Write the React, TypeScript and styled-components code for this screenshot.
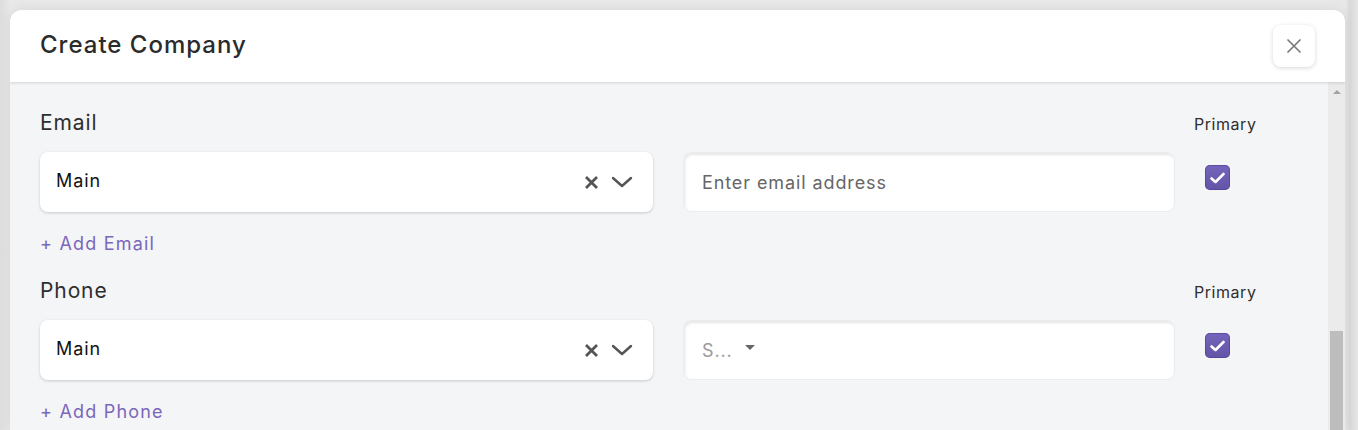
import React from "react";
import styled, { createGlobalStyle } from "styled-components";

const Global = createGlobalStyle`
  html, body { margin: 0; padding: 0; height: 430px; overflow: hidden; }
  body {
    background: #e4e4e4;
    font-family: Inter, "Noto Sans", sans-serif;
    -webkit-font-smoothing: antialiased;
  }
`;

const Page = styled.div`
  height: 430px;
  padding: 10px 13px 0 10px;
  box-sizing: border-box;
  background: linear-gradient(90deg, #dcdcdc 0px, #e8e8e8 10px, #e8e8e8 1345px, #d9d9d9 1350px, #e6e6e6 1358px);
`;

const Modal = styled.div`
  display: flex;
  flex-direction: column;
  height: 420px;
  border-radius: 12px 12px 0 0;
  overflow: hidden;
  background: #f4f5f7;
  box-shadow: 0 0 12px rgba(0, 0, 0, 0.08);
`;

const Header = styled.div`
  height: 72px;
  flex: none;
  display: flex;
  align-items: center;
  justify-content: space-between;
  padding: 0 30px;
  background: #fff;
  box-shadow: 0 1px 3px rgba(0, 0, 0, 0.14);
  position: relative;
  z-index: 1;
`;

const Title = styled.h1`
  margin: -3px 0 0 0;
  font-size: 24px;
  font-weight: 500;
  color: #2b2b2b;
  letter-spacing: 1px;
`;

const CloseButton = styled.button`
  width: 42px;
  height: 42px;
  border: none;
  border-radius: 8px;
  background: #fff;
  box-shadow: 0 1px 4px rgba(0, 0, 0, 0.16);
  display: flex;
  align-items: center;
  justify-content: center;
  padding: 0;
  cursor: pointer;
`;

const BodyRow = styled.div`
  flex: 1;
  display: flex;
  min-height: 0;
`;

const Content = styled.div`
  flex: 1;
  padding: 27px 30px 0 30px;
  overflow: hidden;
`;

const Section = styled.div`
  margin-bottom: 22px;
`;

const Row = styled.div`
  display: flex;
  align-items: flex-start;
`;

const LeftCol = styled.div`
  width: 613px;
  flex: none;
`;

const MidCol = styled.div`
  width: 492px;
  margin-left: 30px;
  flex: none;
`;

const RightCol = styled.div`
  margin-left: 19px;
  display: flex;
  flex-direction: column;
`;

const Label = styled.div`
  font-size: 21px;
  line-height: 28px;
  color: #2e2e2e;
  height: 28px;
  margin-bottom: 15px;
  letter-spacing: 0.9px;
`;

const Spacer = styled.div`
  height: 43px;
`;

const SmallLabel = styled.div`
  font-size: 16px;
  line-height: 22px;
  color: #2e2e2e;
  margin-top: 4px;
  margin-bottom: 30px;
  letter-spacing: 0.55px;
`;

const SelectBox = styled.div`
  height: 60px;
  box-sizing: border-box;
  background: #fff;
  border-radius: 8px;
  box-shadow: 0 1px 3px rgba(0, 0, 0, 0.18);
  display: flex;
  align-items: center;
  padding: 0 20px 0 16px;
`;

const SelectValue = styled.div`
  flex: 1;
  font-size: 18px;
  color: #111;
  margin-top: -4px;
  letter-spacing: 0.9px;
`;

const IconGroup = styled.div`
  display: flex;
  align-items: center;
  gap: 12px;
`;

const InputBox = styled.div`
  height: 60px;
  box-sizing: border-box;
  background: #fff;
  border-radius: 8px;
  border: 1px solid #ececec;
  box-shadow: inset 1px 2px 3px rgba(0, 0, 0, 0.1);
  display: flex;
  align-items: center;
  padding: 0 18px;
`;

const Placeholder = styled.div<{ $muted?: boolean }>`
  font-size: 18px;
  letter-spacing: 0.9px;
  color: ${(p) => (p.$muted ? "#9a9a9a" : "#666")};
`;

const Caret = styled.span`
  display: inline-block;
  margin-left: 12px;
  width: 0;
  height: 0;
  border-left: 5px solid transparent;
  border-right: 5px solid transparent;
  border-top: 5px solid #666;
  transform: translateY(-3px);
`;

const Check = styled.div`
  width: 25px;
  height: 25px;
  margin-left: 11px;
  border-radius: 5px;
  background: linear-gradient(180deg, #7465bb, #6454a8);
  box-shadow: inset 0 0 0 1px rgba(80, 60, 150, 0.6);
  display: flex;
  align-items: center;
  justify-content: center;
`;

const AddLink = styled.div`
  font-size: 18px;
  letter-spacing: 1.2px;
  color: #7a67bb;
  margin-top: 21px;
  line-height: 22px;
`;

const ScrollTrack = styled.div`
  width: 17px;
  flex: none;
  background: #ebebeb;
  display: flex;
  flex-direction: column;
  align-items: center;
`;

const ArrowUp = styled.div`
  margin-top: 8px;
  width: 0;
  height: 0;
  border-left: 4px solid transparent;
  border-right: 4px solid transparent;
  border-bottom: 4px solid #a3a3a3;
`;

const Thumb = styled.div`
  margin-top: 237px;
  width: 13px;
  height: 200px;
  background: #bdbdbd;
`;

const ClearIcon = () => (
  <svg width="15" height="15" viewBox="0 0 15 15">
    <path d="M2 2 L13 13 M13 2 L2 13" stroke="#555" strokeWidth="2.8" strokeLinecap="butt" />
  </svg>
);

const ChevronIcon = () => (
  <svg width="22" height="14" viewBox="0 0 22 14">
    <path d="M2 3 L11 11 L20 3" stroke="#555" strokeWidth="2.4" fill="none" strokeLinecap="round" strokeLinejoin="round" />
  </svg>
);

const CloseIcon = () => (
  <svg width="16" height="16" viewBox="0 0 16 16">
    <path d="M1.5 1.5 L14.5 14.5 M14.5 1.5 L1.5 14.5" stroke="#777" strokeWidth="1.6" />
  </svg>
);

const CheckMark = () => (
  <svg width="15" height="12" viewBox="0 0 15 12">
    <path d="M1.5 6.5 L5.5 10 L13.5 2" stroke="#fff" strokeWidth="2.6" fill="none" strokeLinecap="round" strokeLinejoin="round" />
  </svg>
);

const ContactSection = ({ label, addText, children }: { label: string; addText: string; children: React.ReactNode }) => (
  <Section>
    <Row>
      <LeftCol>
        <Label>{label}</Label>
        <SelectBox>
          <SelectValue>Main</SelectValue>
          <IconGroup>
            <ClearIcon />
            <ChevronIcon />
          </IconGroup>
        </SelectBox>
      </LeftCol>
      <MidCol>
        <Spacer />
        <InputBox>{children}</InputBox>
      </MidCol>
      <RightCol>
        <SmallLabel>Primary</SmallLabel>
        <Check>
          <CheckMark />
        </Check>
      </RightCol>
    </Row>
    <AddLink>+ {addText}</AddLink>
  </Section>
);

export default function App() {
  return (
    <>
      <Global />
      <Page>
        <Modal>
          <Header>
            <Title>Create Company</Title>
            <CloseButton aria-label="Close">
              <CloseIcon />
            </CloseButton>
          </Header>
          <BodyRow>
            <Content>
              <ContactSection label="Email" addText="Add Email">
                <Placeholder>Enter email address</Placeholder>
              </ContactSection>
              <ContactSection label="Phone" addText="Add Phone">
                <Placeholder $muted>S...</Placeholder>
                <Caret />
              </ContactSection>
            </Content>
            <ScrollTrack>
              <ArrowUp />
              <Thumb />
            </ScrollTrack>
          </BodyRow>
        </Modal>
      </Page>
    </>
  );
}
